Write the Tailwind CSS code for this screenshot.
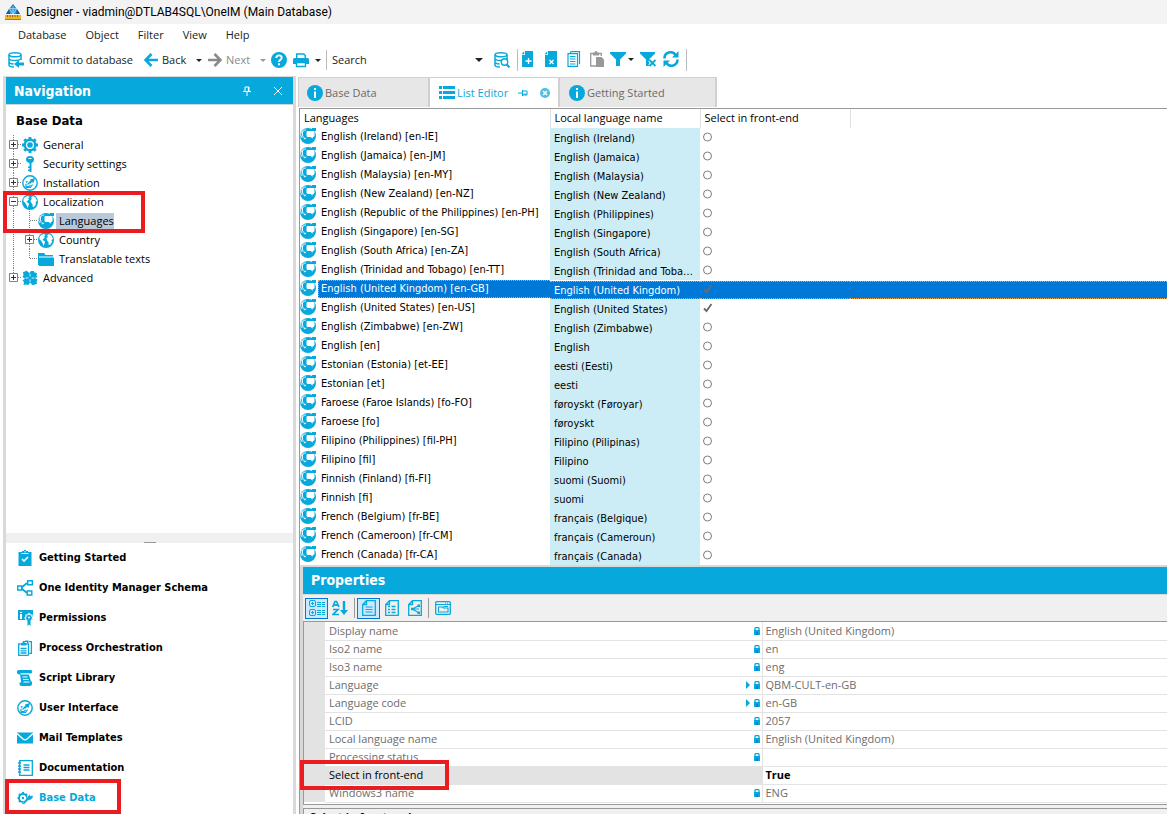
<!DOCTYPE html>
<html lang="en">
<head>
  <meta charset="UTF-8" />
  <meta name="viewport" content="width=device-width, initial-scale=1.0" />
  <title>Designer</title>
  <script src="https://cdn.jsdelivr.net/npm/@tailwindcss/browser@4"></script>
</head>
<body class="h-screen flex flex-col overflow-hidden bg-white text-black font-['Open_Sans',sans-serif] text-[11px] leading-4">

  <!-- icon sprite -->
  <svg class="hidden">
    <symbol id="app" viewBox="0 0 16 16"><path d="M8 0l3 4H5z" fill="#1b75bb"/><path d="M4.500 4.500h7L15 10H1z" fill="#2f9be0"/><path d="M8 2v8M4.500 5L8 10l3.500-5" stroke="#8fd3f5" fill="none"/><path d="M1 10l3-5 1 5zM15 10l-3-5-1 5z" fill="#135d9c"/><path d="M0 11h16v5H0z" fill="#f0b429"/><path d="M2.500 11v2M5 11v2M7.500 11v2M10 11v2M12.500 11v2" stroke="#7a5410" stroke-width=".8"/><path d="M0 15.500h16" stroke="#b07a10"/></symbol>
    <symbol id="db" viewBox="0 0 16 16"><g fill="none" stroke="#07a8db" stroke-width="1.500"><ellipse cx="7" cy="2.800" rx="6" ry="2"/><path d="M1 3v10c0 1.200 2.500 2 5 2M13 3v5M1 6.500c0 1.200 2.700 2 6 2M1 10c0 1 2 1.800 4.500 2M7 8.500c3 0 5-.6 6-1.500"/></g></symbol>
    <symbol id="commit" viewBox="0 0 16 16"><use href="#db"/><path d="M6 12l5-4v2.500h5v3h-5V16z" fill="#07a8db"/></symbol>
    <symbol id="dbsearch" viewBox="0 0 16 16"><use href="#db"/><circle cx="10.500" cy="10" r="3.200" fill="#fff" stroke="#07a8db" stroke-width="1.400"/><path d="M12.800 12.500L15.500 15.500" stroke="#07a8db" stroke-width="2"/></symbol>
    <symbol id="left" viewBox="0 0 14 14"><path d="M14 7H2M7.500 1L1.500 7l6 6" fill="none" stroke="currentColor" stroke-width="2.600"/></symbol>
    <symbol id="right" viewBox="0 0 14 14"><path d="M0 7h12M6.500 1l6 6-6 6" fill="none" stroke="currentColor" stroke-width="2.600"/></symbol>
    <symbol id="drop" viewBox="0 0 8 4"><path d="M0 0h8L4 4z" fill="currentColor"/></symbol>
    <symbol id="help" viewBox="0 0 16 16"><circle cx="8" cy="8" r="8" fill="#07a8db"/><path d="M5.300 6c0-3.600 5.500-3.400 5.400-.3C10.700 7.700 8 7.700 8 10" fill="none" stroke="#fff" stroke-width="1.900"/><path d="M7 11.300h2v2H7z" fill="#fff"/></symbol>
    <symbol id="print" viewBox="0 0 16 16"><path d="M3.700 6V2h7l1.600 1.500V6" fill="none" stroke="#07a8db" stroke-width="1.500"/><path d="M0 7.500Q0 6 1.500 6h13Q16 6 16 7.500V12h-3v-2H3v2H0z" fill="#07a8db"/><path d="M3.500 10.500h9v4h-9z" fill="#fff" stroke="#07a8db" stroke-width="1.400"/></symbol>
    <symbol id="newdoc" viewBox="0 0 16 16"><path d="M5 0h8v16H2V4h3zM1.500 3.200L4.200.3v2.900z" fill="#07a8db"/><path d="M8.500 7v6M5.500 10h6" stroke="#fff" stroke-width="1.300"/></symbol>
    <symbol id="deldoc" viewBox="0 0 16 16"><path d="M5 0h9v16H2V4h3zM1.500 3.200L4.200.3v2.900z" fill="#07a8db"/><path d="M6.500 9l4 4M10.500 9l-4 4" stroke="#fff" stroke-width="1.200"/></symbol>
    <symbol id="copy" viewBox="0 0 16 16"><path d="M4.500.7h9v12.600M4.500.7v1.500M2 2.700h9.500v12.600H2zM4 5.500h5.500M4 8h5.500M4 10.500h5.500M4 13h5.500" fill="none" stroke="#07a8db" stroke-width="1.200"/></symbol>
    <symbol id="paste" viewBox="0 0 16 16"><path d="M7 15H1.700V2.500H4M10 2.500h2.300V5" fill="none" stroke="#999" stroke-width="1.300"/><path d="M4 1.500h1.500a1.500 1.500 0 013 0H10v3H4zM7 6h5.500L15 8.500V16H7z" fill="#999"/></symbol>
    <symbol id="filter" viewBox="0 0 16 16"><path d="M0 1h16v1.500L10 8.500V15H6V8.500L0 2.500z" fill="#07a8db"/></symbol>
    <symbol id="nofilter" viewBox="0 0 16 16"><path d="M0 1h15v1.500L9.500 8v7H6V8.500L0 2.500z" fill="#07a8db"/><path d="M9.500 9l6 6M15.500 9l-6 6" stroke="#fff" stroke-width="3.400"/><path d="M9.500 9l6 6M15.500 9l-6 6" stroke="#07a8db" stroke-width="1.900"/></symbol>
    <symbol id="refresh" viewBox="0 0 16 16"><path d="M1.500 7.500A6 6 0 0112.500 4M14.500 8.500A6 6 0 013.500 12" fill="none" stroke="#07a8db" stroke-width="2.600"/><path d="M15.500 0v6.500H9zM.5 16V9.500H7z" fill="#07a8db"/></symbol>
    <symbol id="pin" viewBox="0 0 8 10"><path d="M2 1h4v4M2 1v4M0 5.500h8M4 6v4M5.400 1v4" fill="none" stroke="currentColor"/></symbol>
    <symbol id="close" viewBox="0 0 8 8"><path d="M0 0l8 8M8 0L0 8" stroke="currentColor"/></symbol>
    <symbol id="sidepin" viewBox="0 0 10 8"><path d="M0 4h4M4.500 1v6M5 2h4v4H5M5 5.200h4" fill="none" stroke="#07a8db"/></symbol>
    <symbol id="tabclose" viewBox="0 0 10 10"><circle cx="5" cy="5" r="5" fill="#4fbfe3"/><path d="M3 3l4 4M7 3L3 7" stroke="#fff" stroke-width="1.500"/></symbol>
    <symbol id="info" viewBox="0 0 16 16"><circle cx="8" cy="8" r="8" fill="#07a8db"/><path d="M7 3h2v2H7zM7 6.500h2V13H7z" fill="#fff"/></symbol>
    <symbol id="list" viewBox="0 0 16 14"><path d="M0 0h3v3H0zM4 0h12v3H4zM0 5h3v3H0zM4 5h12v3H4zM0 10h3v3H0zM4 10h12v3H4z" fill="#07a8db"/></symbol>
    <symbol id="gear" viewBox="0 0 16 16"><circle cx="8" cy="8" r="5.300" fill="none" stroke="#07a8db" stroke-width="2.400"/><circle cx="8" cy="8" r="2.800" fill="#07a8db"/><path d="M8 0v3M8 13v3M0 8h3M13 8h3M2.300 2.300l2 2M11.700 11.700l2 2M2.300 13.700l2-2M11.700 4.300l2-2" stroke="#07a8db" stroke-width="2.800"/></symbol>
    <symbol id="key" viewBox="0 0 16 16"><path d="M8 0a4 3.600 0 014 3.600C12 5.300 11 6.500 9.500 7v9h-2v-1H6v-1.500h1.500V12H6v-1.500h1.500V7C5.500 6.500 4 5.300 4 3.600A4 3.600 0 018 0z" fill="#07a8db"/><path d="M6.500 2.500h3" stroke="#fff"/></symbol>
    <symbol id="compass" viewBox="0 0 16 16"><circle cx="8" cy="8" r="7.200" fill="#fff" stroke="#07a8db" stroke-width="1.400"/><path d="M13 3l-1.500 5L10 7 8 9 6.500 7.500 8.500 5.500 8 4.500zM3.500 6.500L6 6 4.500 8.500z" fill="#07a8db"/><path d="M4 9v2.500h3L8.500 10M5.500 9.500L7 8M10.500 9.500l-2 3-5 0" fill="none" stroke="#07a8db" stroke-width="1.200"/></symbol>
    <symbol id="globe" viewBox="0 0 16 16"><circle cx="8" cy="8" r="8" fill="#07a8db"/><path d="M1.500 5L3 3l3-1 1.500 1L6 4.500l1 1-2 1.700L4.500 8 7 9.500 6.500 11.500 5.500 14 4.500 11 3 8.500 1.500 7.500zM9 3.500L11 2l2.500 1.500L15 7l-1.500 1 .5 2-2 3-1.500-.5V10L9 8.500 8.500 6l1.500-1z" fill="#fff"/></symbol>
    <symbol id="lang" viewBox="0 0 16 16"><circle cx="8" cy="8" r="8" fill="#07a8db"/><path d="M12 0h4v3h-4z" fill="#07a8db"/><path d="M7 3h6.500l1 1v4l-1 1h-.7l-.3 1.700L10.800 9H7.500L6.500 8V4z" fill="#fff"/><path d="M6 2H4.500L2.500 4v4l1.500 1.500L4.500 11l1.700-1M3 2.500L.8 5v3l1.500 2" fill="none" stroke="#fff" stroke-width=".9"/></symbol>
    <symbol id="folder" viewBox="0 0 16 16"><path d="M0 2h6l1.500 2H15v1.500H0zM1 6.500h15V15H1zM0 5h1v9H0z" fill="#07a8db"/></symbol>
    <symbol id="puzzle" viewBox="0 0 16 16"><path d="M1 2l2-.5L4.500.5 6 2l1.500 1L9 1l2.500 0 1 1.500L15 3l-.5 2.500L15.500 7 13 8l2.500 1.500L14.500 12l.5 2-2.500.5L11 15.500 9.500 14 8 12.500 6.500 15 4 14.500l-2.500.5L2 12 .5 10.500 3 8.500.5 7 1.500 5z" fill="#07a8db"/><path d="M8 3.500v3M8 9.500v2.500M3.500 8h3M9.500 8h3" stroke="#fff" stroke-width=".8"/></symbol>
    <symbol id="task" viewBox="0 0 16 16"><path d="M1.500 2H5V1h2V0h2v1h2v1h3.500v14h-13z" fill="#07a8db"/><path d="M4.500 3.500h7M7.300 1.800h1.400" stroke="#fff"/><path d="M5 9l2 2 4-4" fill="none" stroke="#fff" stroke-width="1.600"/></symbol>
    <symbol id="schema" viewBox="0 0 16 16"><g fill="#fff" stroke="#07a8db" stroke-width="1.400"><path d="M4 8l6-5M4 8l6 5" fill="none" stroke-width="1.700"/><path d="M.7 6h4v4h-4zM10.700.7h4.600v4h-4.600zM10.200 11h4.600v4h-4.600z"/></g></symbol>
    <symbol id="perm" viewBox="0 0 16 16"><path d="M1 0h15v10H1z" fill="#07a8db"/><path d="M3 2h2v1H3zM3 4h2v5H3z" fill="#fff"/><path d="M12 3.500l1.300 1.200 1.700.3v1.700l1 1.300-1 1.300-.5 1.500-1.500.4-1 .8-1-.8-1.500-.4-.5-1.500-1-1.300 1-1.300V5l1.700-.3z" fill="#07a8db" stroke="#fff" stroke-width="1.100"/><path d="M10.500 10.500h3V16L12 14.500 10.500 16z" fill="#07a8db"/><circle cx="12" cy="7.500" r="1.100" fill="#fff"/></symbol>
    <symbol id="process" viewBox="0 0 16 16"><g fill="none" stroke="#07a8db" stroke-width="1.300"><path d="M11.500 15.300H1.700V4h2M9 4h2.500v11.300M12 1.700h2.400v11.600h-2M6 1.700h2"/><path d="M3.500 8.500h6M3.500 10.800h6M3.500 13h6"/></g><path d="M4 3h1.500V1.800h2V3H9v2.500H4zM8 .5h3.500V3H10V2H8z" fill="#07a8db"/></symbol>
    <symbol id="script" viewBox="0 0 16 16"><path d="M1.500 0H13.500a1.800 1.800 0 010 3.600H11.500L14 11.500h1V14q0 2-2 2H4.500Q2.500 16 2.500 14v-1.500h1.700L3 4.500H2A2.300 2.300 0 011.500 0z" fill="#07a8db"/><path d="M3.500 3.900H12M5.500 7h5M6 9.500h5.500M6.500 12h6" stroke="#fff" stroke-width="1.100"/></symbol>
    <symbol id="mail" viewBox="0 0 16 16"><path d="M0 2.500h16v11H0z" fill="#07a8db"/><path d="M0 3.500l6 5.500q2 1.500 4 0l6-5.500" fill="none" stroke="#fff" stroke-width="1.300"/></symbol>
    <symbol id="doc" viewBox="0 0 16 16"><path d="M2.700.7h12.600v14.600H2.700z" fill="none" stroke="#07a8db" stroke-width="1.300"/><path d="M1 3h3M1 6h3M1 9h3M1 12h3M6.500 5h6M6.500 7.500h6M6.500 10h6" stroke="#07a8db" stroke-width="1.300"/></symbol>
    <symbol id="tools" viewBox="0 0 16 16"><circle cx="6" cy="8" r="4" fill="none" stroke="#07a8db" stroke-width="1.800"/><path d="M6 2v2M6 12v2M.5 8h2M2 4l1.500 1.500M2 12l1.500-1.500M8.500 5.500L10 4" stroke="#07a8db" stroke-width="2"/><path d="M10.300 7.300L12.500 4l1 2 2.300-.8.200 2.300L13.500 10l-2.300.2-4.200 4.300L5.500 13z" fill="#07a8db" stroke="#fff" stroke-width=".5"/><circle cx="6" cy="8" r="1.200" fill="#07a8db"/></symbol>
    <symbol id="categ" viewBox="0 0 16 16"><g fill="none" stroke="#07a8db"><rect x=".5" y=".5" width="6" height="6" rx="1.500"/><rect x=".5" y="9.500" width="6" height="6" rx="1.500"/><path d="M2 3.500h3M3.500 2v3M2 12.500h3M3.500 11v3"/><path d="M8 2.500h4M8 4.500h4M8 6.500h4M8 10.500h4M8 12.500h4M8 14.500h4M13 2.500h3M13 4.500h3M13 6.500h3M13 10.500h3M13 12.500h3M13 14.500h3"/></g></symbol>
    <symbol id="sort" viewBox="0 0 16 16"><path d="M.7 7L3 1.500h1.500L7 7M2 5.200h4M1 9.500h5L1 14.500h6" fill="none" stroke="#07a8db" stroke-width="1.700"/><path d="M10.800 1h2.400v9H16l-4 5-4-5h2.800z" fill="#07a8db"/></symbol>
    <symbol id="page" viewBox="0 0 16 16"><path d="M5.500.7h8.800v14.600H1.700V4.500zM1.700 4.500h3.800V.7" fill="none" stroke="#07a8db" stroke-width="1.300"/></symbol>
    <symbol id="pagelines" viewBox="0 0 16 16"><use href="#page"/><path d="M4.500 7h7M4.500 9.500h7M4.500 12h7" stroke="#07a8db" stroke-width="1.200"/></symbol>
    <symbol id="pagelist" viewBox="0 0 16 16"><use href="#page"/><path d="M4 6.500h2M7.500 6.500h4M4 9.500h2M7.500 9.500h4M4 12.500h2M7.500 12.500h4" stroke="#07a8db" stroke-width="1.500"/></symbol>
    <symbol id="pageshare" viewBox="0 0 16 16"><use href="#page"/><path d="M12 5.500L5.500 9l6.500 4M6 9h6" fill="none" stroke="#07a8db" stroke-width="1.100"/><path d="M4 7.700h3v2.600H4zM10.500 4.500H13V7h-2.500zM10.500 11.500H13V14h-2.500z" fill="#07a8db"/></symbol>
    <symbol id="window" viewBox="0 0 16 16"><rect x=".7" y="1.700" width="14.600" height="12.600" rx="1" fill="none" stroke="#07a8db" stroke-width="1.300"/><path d="M1 4.500h14" stroke="#07a8db"/><path d="M10 3h1M12 3h1" stroke="#07a8db"/><path d="M3.500 7h4l1 1h4.500v4H3.500zM8.500 6.500H13" fill="none" stroke="#07a8db" stroke-width="1.100"/></symbol>
    <symbol id="lock" viewBox="0 0 6 8"><path d="M0 3h6v5H0z" fill="#07a8db"/><path d="M1 4V1.500Q1 .6 2 .6h2q1 0 1 .9V4" fill="none" stroke="#07a8db" stroke-width="1.300"/><path d="M2.500 5h1v3h-1z" fill="#0a63d6"/></symbol>
    <symbol id="play" viewBox="0 0 4 8"><path d="M0 0l4 4-4 4z" fill="#07a8db"/></symbol>
    <symbol id="check" viewBox="0 0 10 10"><path d="M1 5.500L3.500 8 8.500 1" fill="none" stroke="#6b6b6b" stroke-width="1.900"/></symbol>
    <symbol id="ring" viewBox="0 0 10 10"><circle cx="4.500" cy="5" r="4" fill="#fff" stroke="#7d7d7d"/></symbol>
    <!-- tree connectors, 16 x 19 -->
    <symbol id="plus" viewBox="0 0 16 19"><path d="M7.500 0v19M12 9.500h4" stroke="#808080" stroke-dasharray="1 1"/><path d="M3.500 5.500h8v8h-8z" fill="#fff" stroke="#808080"/><path d="M5 9.500h5M7.500 7v5" stroke="#333"/></symbol>
    <symbol id="minus" viewBox="0 0 16 19"><path d="M7.500 0v19M12 9.500h4" stroke="#808080" stroke-dasharray="1 1"/><path d="M3.500 5.500h8v8h-8z" fill="#fff" stroke="#808080"/><path d="M5 9.500h5" stroke="#333"/></symbol>
    <symbol id="pluslast" viewBox="0 0 16 19"><path d="M7.500 0v6M12 9.500h4" stroke="#808080" stroke-dasharray="1 1"/><path d="M3.500 5.500h8v8h-8z" fill="#fff" stroke="#808080"/><path d="M5 9.500h5M7.500 7v5" stroke="#333"/></symbol>
    <symbol id="line" viewBox="0 0 16 19"><path d="M7.500 0v19" stroke="#808080" stroke-dasharray="1 1"/></symbol>
    <symbol id="tee" viewBox="0 0 16 19"><path d="M7.500 0v19M8 9.500h8" stroke="#808080" stroke-dasharray="1 1"/></symbol>
    <symbol id="elbow" viewBox="0 0 16 19"><path d="M7.500 0v10M8 9.500h8" stroke="#808080" stroke-dasharray="1 1"/></symbol>
  </svg>

  <header class="h-6 shrink-0 flex items-center gap-[5px] pl-[5px] pb-px bg-[#f3f3f3] font-[Roboto,sans-serif] text-xs">
    <svg class="size-4"><use href="#app"/></svg>
    <h1>Designer - viadmin@DTLAB4SQL\OneIM (Main Database)</h1>
  </header>

  <nav class="h-[22px] shrink-0 flex items-center gap-[19px] pl-[18px] text-[#222]">
    <button>Database</button>
    <button>Object</button>
    <button>Filter</button>
    <button>View</button>
    <button>Help</button>
  </nav>

  <div class="h-[30px] shrink-0 flex items-center pb-[2px] pl-2 text-[#222]">
    <button class="flex items-center gap-[5px] w-[136px]"><svg class="size-4"><use href="#commit"/></svg>Commit to database</button>
    <button class="flex items-center gap-1 w-[52px]"><svg class="size-[14px] text-[#07a8db]"><use href="#left"/></svg>Back</button>
    <button class="w-3" aria-label="Back history"><svg class="w-[6px] h-[3px]"><use href="#drop"/></svg></button>
    <button class="flex items-center gap-1 w-[52px] text-[#8a8a8a]"><svg class="size-[14px]"><use href="#right"/></svg>Next</button>
    <button class="w-[11px] text-[#999]" aria-label="Next history"><svg class="w-[6px] h-[3px]"><use href="#drop"/></svg></button>
    <button class="w-[22px]" aria-label="Help"><svg class="size-4"><use href="#help"/></svg></button>
    <button class="w-[22px]" aria-label="Print"><svg class="size-4"><use href="#print"/></svg></button>
    <button class="w-[11px]" aria-label="Print options"><svg class="w-[6px] h-[3px]"><use href="#drop"/></svg></button>
    <div class="flex items-center h-5 w-[168px] border-l border-[#bbb]">
      <input class="w-[148px] pl-[5px] outline-none placeholder:text-[#222]" type="text" placeholder="Search" aria-label="Search" />
      <button aria-label="Search history"><svg class="w-2 h-1"><use href="#drop"/></svg></button>
    </div>
    <button class="w-[23px]" aria-label="Search database"><svg class="size-4"><use href="#dbsearch"/></svg></button>
    <div class="flex items-center h-[22px] border-l border-r border-[#bbb] pb-[2px] pl-[2px] w-[170px]">
      <button class="w-[23px]" aria-label="New"><svg class="size-4"><use href="#newdoc"/></svg></button>
      <button class="w-[23px]" aria-label="Delete"><svg class="size-4"><use href="#deldoc"/></svg></button>
      <button class="w-[23px]" aria-label="Copy"><svg class="size-4"><use href="#copy"/></svg></button>
      <button class="w-[21px]" aria-label="Paste"><svg class="size-4"><use href="#paste"/></svg></button>
      <button class="w-[18px]" aria-label="Filter"><svg class="size-4"><use href="#filter"/></svg></button>
      <button class="w-3" aria-label="Filter options"><svg class="w-[6px] h-[3px]"><use href="#drop"/></svg></button>
      <button class="w-[23px]" aria-label="Clear filter"><svg class="size-4"><use href="#nofilter"/></svg></button>
      <button aria-label="Refresh"><svg class="size-4"><use href="#refresh"/></svg></button>
    </div>
  </div>

  <main class="flex-1 min-h-0 flex">
    <!-- navigation -->
    <aside class="w-[293px] shrink-0 ml-[3px] flex flex-col border-3 border-b-0 border-t-1 border-[#d9d9d9]">
      <div class="h-7 shrink-0 flex items-center bg-[#07a8db] text-white pl-2 pr-[11px] border-b border-[#c8d8de]">
        <h2 class="flex-1 font-['DejaVu_Sans_Condensed',sans-serif] font-bold text-sm">Navigation</h2>
        <button class="mr-[23px]" aria-label="Pin"><svg class="w-2 h-[10px]"><use href="#pin"/></svg></button>
        <button aria-label="Close"><svg class="size-2"><use href="#close"/></svg></button>
      </div>
      <div class="flex-1 min-h-0 pt-[6px]">
        <h3 class="pl-[10px] h-6 leading-5 font-['DejaVu_Sans_Condensed',sans-serif] font-bold text-[13px]">Base Data</h3>
        <ul id="tree"></ul>
      </div>
      <div class="h-[10px] shrink-0 flex items-end justify-center bg-[#f0f0f0]"><span class="w-3 h-px bg-[#999]"></span></div>
      <ul id="sections" class="shrink-0 pb-px font-['DejaVu_Sans_Condensed',sans-serif] font-bold"></ul>
    </aside>

    <section class="flex-1 min-w-0 flex flex-col ml-[2px]">
      <div class="h-8 shrink-0 flex pt-px pb-px text-[#6a6a6a]">
        <button class="w-[132px] flex items-center gap-[2px] pl-2 bg-[#e7e7e7] border-t border-l border-r-2 border-[#d0d0d0]"><svg class="size-4"><use href="#info"/></svg>Base Data</button>
        <button class="w-[130px] flex items-center gap-[2px] pl-[9px] bg-white border-t border-r-2 border-[#d0d0d0] text-[#07a8db]"><svg class="w-4 h-[14px]"><use href="#list"/></svg>List Editor<svg class="w-[10px] h-2 ml-2 mr-[10px]"><use href="#sidepin"/></svg><svg class="size-[10px]"><use href="#tabclose"/></svg></button>
        <button class="w-[157px] flex items-center gap-[2px] pl-[9px] bg-[#e7e7e7] border-t border-r-2 border-[#d0d0d0]"><svg class="size-4"><use href="#info"/></svg>Getting Started</button>
      </div>

      <div class="flex-1 min-h-0 flex flex-col ml-px border-l border-t border-[#999]">
        <div class="shrink-0 overflow-hidden">
          <table class="w-full table-fixed border-collapse">
            <colgroup><col class="w-[250px]"><col class="w-[150px]"><col class="w-[150px]"><col></colgroup>
            <thead>
              <tr class="h-[19px] text-left">
                <th class="font-normal pl-1 pt-0 pb-[2px] border-r border-[#e0e0e0]">Languages</th>
                <th class="font-normal pl-1 pt-0 pb-[2px] border-r border-[#e0e0e0]">Local language name</th>
                <th class="font-normal pl-1 pt-0 pb-[2px] border-r border-[#e0e0e0]">Select in front-end</th>
                <th></th>
              </tr>
            </thead>
            <tbody id="languages" class="font-['DejaVu_Sans_Condensed',sans-serif]"></tbody>
          </table>
        </div>

        <div class="flex-1 min-h-0 overflow-hidden bg-[#d9d9d9] pl-[3px] pt-[2px]">
          <h2 class="h-[27px] pl-2 leading-[27px] bg-[#07a8db] text-white font-['DejaVu_Sans_Condensed',sans-serif] font-bold text-sm">Properties</h2>
          <div class="h-[27px] flex items-center pl-[2px] bg-[#f0f0f0] border-t border-[#d9d9d9]">
            <button class="w-[23px] h-[21px] grid place-items-center bg-[#cce8ff] border border-[#0078d7]" aria-label="Categorized"><svg class="size-4"><use href="#categ"/></svg></button>
            <button class="w-6 grid place-items-center" aria-label="Alphabetical"><svg class="size-4"><use href="#sort"/></svg></button>
            <span class="w-px h-5 mx-[2px] bg-[#999]"></span>
            <button class="w-[23px] h-[21px] grid place-items-center bg-[#cce8ff] border border-[#0078d7]" aria-label="All"><svg class="size-4"><use href="#pagelines"/></svg></button>
            <button class="w-[23px] grid place-items-center" aria-label="List"><svg class="size-4"><use href="#pagelist"/></svg></button>
            <button class="w-[23px] grid place-items-center" aria-label="Relations"><svg class="size-4"><use href="#pageshare"/></svg></button>
            <span class="w-px h-5 mx-[2px] bg-[#999]"></span>
            <button class="w-[23px] grid place-items-center" aria-label="Form"><svg class="size-4"><use href="#window"/></svg></button>
          </div>
          <div class="border-t border-l border-b border-[#999] bg-white pb-px">
            <table class="w-full table-fixed border-collapse text-[#6d6d6d]">
              <colgroup><col class="w-[21px]"><col class="w-[437px]"><col></colgroup>
              <tbody id="properties"></tbody>
            </table>
          </div>
          <div class="border-t-3 border-[#f0f0f0]">
            <div class="h-10 bg-[#f0f0f0] border-t border-l border-[#999] pl-[6px] font-bold">Select in front-end</div>
          </div>
        </div>
      </div>
    </section>
  </main>

  <script>
    const icon = (id, cls) => `<svg class="${cls}"><use href="#${id}"/></svg>`;

    // [connector cells, icon, label, selected, boxed]
    const tree = [
      [["plus"], "gear", "General"],
      [["plus"], "key", "Security settings"],
      [["plus"], "compass", "Installation"],
      [["minus"], "globe", "Localization", false, true],
      [["line", "tee"], "lang", "Languages", true],
      [["line", "plus"], "globe", "Country"],
      [["line", "elbow"], "folder", "Translatable texts"],
      [["pluslast"], "puzzle", "Advanced"]
    ];
    document.getElementById("tree").innerHTML = tree.map(([cells, ic, label, sel, boxed]) => `
      <li class="relative flex items-center h-[19px]">
        ${cells.map(c => icon(c, "w-4 h-[19px] shrink-0")).join("")}
        ${icon(ic, "size-4 shrink-0")}
        <a href="#" class="${sel ? "ml-[2px] pl-[3px] h-4 bg-[#b9c9da]" : "ml-[5px]"}">${label}</a>
        ${boxed ? '<span class="absolute z-10 -left-[3px] -top-[1px] w-[142px] h-[42px] border-4 border-[#ea1c1f]"></span>' : ""}
      </li>`).join("");

    const sections = [
      ["task", "Getting Started"],
      ["schema", "One Identity Manager Schema"],
      ["perm", "Permissions"],
      ["process", "Process Orchestration"],
      ["script", "Script Library"],
      ["compass", "User Interface"],
      ["mail", "Mail Templates"],
      ["doc", "Documentation"],
      ["tools", "Base Data", true]
    ];
    document.getElementById("sections").innerHTML = sections.map(([ic, label, active]) => `
      <li class="relative h-[30px]">
        <a href="#" class="h-full flex items-center gap-[6px] pl-[11px] ${active ? "text-[#07a8db]" : ""}">${icon(ic, "size-4")}${label}</a>
        ${active ? '<span class="absolute -left-px -top-1 w-[116px] h-[35px] border-4 border-[#ea1c1f]"></span>' : ""}
      </li>`).join("");

    const languages = [
      ["English (Ireland) [en-IE]", "English (Ireland)"],
      ["English (Jamaica) [en-JM]", "English (Jamaica)"],
      ["English (Malaysia) [en-MY]", "English (Malaysia)"],
      ["English (New Zealand) [en-NZ]", "English (New Zealand)"],
      ["English (Republic of the Philippines) [en-PH]", "English (Philippines)"],
      ["English (Singapore) [en-SG]", "English (Singapore)"],
      ["English (South Africa) [en-ZA]", "English (South Africa)"],
      ["English (Trinidad and Tobago) [en-TT]", "English (Trinidad and Toba…"],
      ["English (United Kingdom) [en-GB]", "English (United Kingdom)", true, true],
      ["English (United States) [en-US]", "English (United States)", true],
      ["English (Zimbabwe) [en-ZW]", "English (Zimbabwe)"],
      ["English [en]", "English"],
      ["Estonian (Estonia) [et-EE]", "eesti (Eesti)"],
      ["Estonian [et]", "eesti"],
      ["Faroese (Faroe Islands) [fo-FO]", "føroyskt (Føroyar)"],
      ["Faroese [fo]", "føroyskt"],
      ["Filipino (Philippines) [fil-PH]", "Filipino (Pilipinas)"],
      ["Filipino [fil]", "Filipino"],
      ["Finnish (Finland) [fi-FI]", "suomi (Suomi)"],
      ["Finnish [fi]", "suomi"],
      ["French (Belgium) [fr-BE]", "français (Belgique)"],
      ["French (Cameroon) [fr-CM]", "français (Cameroun)"],
      ["French (Canada) [fr-CA]", "français (Canada)"]
    ];
    document.getElementById("languages").innerHTML = languages.map(([name, local, on, sel]) => {
      const bar = sel ? "bg-[#0078d7] text-white border-y border-dotted border-[#f0a040]" : "";
      return `
      <tr class="h-[19px]">
        <td class="p-0"><div class="flex items-start h-[19px]">${icon("lang", "size-4 shrink-0 mr-[2px]")}<span class="flex-1 h-[18px] flex items-center whitespace-nowrap ${bar} ${sel ? "border-l pl-[2px]" : "pl-[3px]"}">${name}</span></div></td>
        <td class="p-0 ${sel ? "" : "bg-[#cdedf6]"}"><div class="h-[18px] flex items-center pt-[2px] pl-1 whitespace-nowrap ${bar}">${local}</div></td>
        <td class="p-0"><div class="h-[18px] flex items-center pb-[2px] pl-[3px] ${bar}">${icon(on ? "check" : "ring", "size-[10px]")}</div></td>
        <td class="p-0"><div class="h-[18px] ${bar}"></div></td>
      </tr>`;
    }).join("");

    // [label, value, has reference]
    const properties = [
      ["Display name", "English (United Kingdom)"],
      ["Iso2 name", "en"],
      ["Iso3 name", "eng"],
      ["Language", "QBM-CULT-en-GB", true],
      ["Language code", "en-GB", true],
      ["LCID", "2057"],
      ["Local language name", "English (United Kingdom)"],
      ["Processing status", ""],
      ["Select in front-end", "True"],
      ["Windows3 name", "ENG"]
    ];
    document.getElementById("properties").innerHTML = properties.map(([label, value, ref]) => {
      const sel = value === "True";
      return `
      <tr class="h-[18px]">
        <td class="p-0 bg-[#e3e3e3]"></td>
        <td class="p-0 border-b border-r border-[#e3e3e3] ${sel ? "bg-[#e3e3e3] text-black" : ""}">
          <div class="relative flex items-center h-[17px] pl-1 pr-[2px]">
            <span class="flex-1">${label}</span>
            ${ref ? icon("play", "w-1 h-2 mr-1") : ""}${sel ? "" : icon("lock", "w-[6px] h-2")}
            ${sel ? '<span class="absolute -left-[25px] -top-[7px] w-[149px] h-[30px] border-4 border-[#ea1c1f]"></span>' : ""}
          </div>
        </td>
        <td class="p-0 pl-[3px] border-b border-[#e3e3e3] ${sel ? "text-black font-bold" : ""}">${value}</td>
      </tr>`;
    }).join("");
  </script>
</body>
</html>
